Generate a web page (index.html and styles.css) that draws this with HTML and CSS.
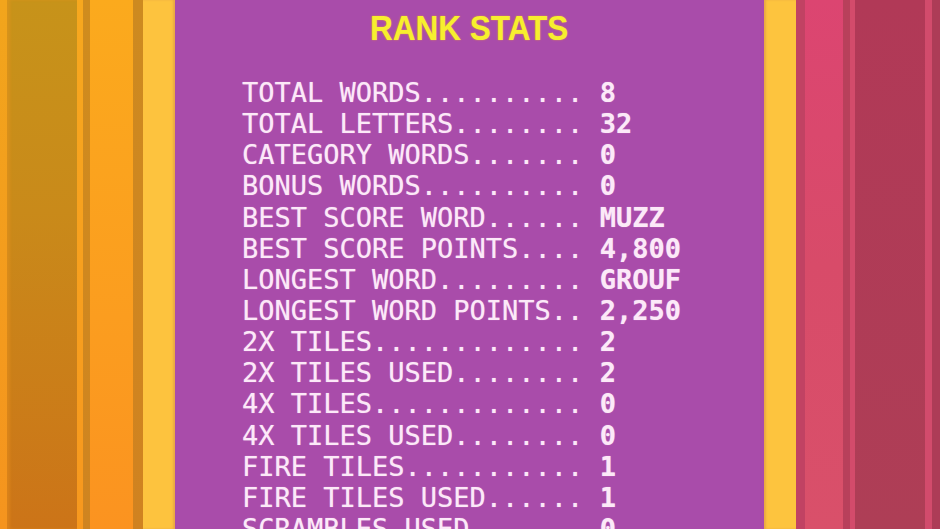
FILE: index.html
```html
<!DOCTYPE html>
<html lang="en">
<head>
<meta charset="utf-8">
<title>Rank Stats</title>
<link rel="stylesheet" href="styles.css">
</head>
<body>
<div class="screen">
  <div class="stripe l1"></div>
  <div class="stripe l2"></div>
  <div class="stripe l3"></div>
  <div class="stripe l4"></div>
  <div class="stripe l5"></div>
  <div class="stripe l6"></div>
  <div class="stripe l7"></div>
  <main class="panel">
    <h1 class="title"><span class="title-text">RANK STATS</span></h1>
    <div class="stats">
      <div class="row"><span class="label">TOTAL WORDS..........</span> <span class="value">8</span></div>
      <div class="row"><span class="label">TOTAL LETTERS........</span> <span class="value">32</span></div>
      <div class="row"><span class="label">CATEGORY WORDS.......</span> <span class="value">0</span></div>
      <div class="row"><span class="label">BONUS WORDS..........</span> <span class="value">0</span></div>
      <div class="row"><span class="label">BEST SCORE WORD......</span> <span class="value">MUZZ</span></div>
      <div class="row"><span class="label">BEST SCORE POINTS....</span> <span class="value">4,800</span></div>
      <div class="row"><span class="label">LONGEST WORD.........</span> <span class="value">GROUF</span></div>
      <div class="row"><span class="label">LONGEST WORD POINTS..</span> <span class="value">2,250</span></div>
      <div class="row"><span class="label">2X TILES.............</span> <span class="value">2</span></div>
      <div class="row"><span class="label">2X TILES USED........</span> <span class="value">2</span></div>
      <div class="row"><span class="label">4X TILES.............</span> <span class="value">0</span></div>
      <div class="row"><span class="label">4X TILES USED........</span> <span class="value">0</span></div>
      <div class="row"><span class="label">FIRE TILES...........</span> <span class="value">1</span></div>
      <div class="row"><span class="label">FIRE TILES USED......</span> <span class="value">1</span></div>
      <div class="row"><span class="label">SCRAMBLES USED.......</span> <span class="value">0</span></div>
    </div>
  </main>
  <div class="stripe r1"></div>
  <div class="stripe r2"></div>
  <div class="stripe r3"></div>
  <div class="stripe r4"></div>
  <div class="stripe r5"></div>
  <div class="stripe r6"></div>
  <div class="stripe r7"></div>
  <div class="stripe r8"></div>
</div>
</body>
</html>
```

FILE: styles.css
```css
html, body {
  margin: 0;
  padding: 0;
  width: 940px;
  height: 529px;
  overflow: hidden;
  background: #a94caa;
}

.screen {
  display: flex;
  width: 940px;
  height: 529px;
}

.stripe {
  flex: none;
  height: 100%;
}

.l1 { width: 7px; background: linear-gradient(#f2a51c, #f5941e); }
.l2 { width: 70px; background: linear-gradient(#c7931a, #c98a1a 40%, #cc7418); box-shadow: inset 3px 0 3px rgba(240,150,30,0.4); }
.l3 { width: 6px; background: linear-gradient(#f7a81e, #f7981e); }
.l4 { width: 7px; background: linear-gradient(#cf8c1e, #cf8420); }
.l5 { width: 43px; background: linear-gradient(#fbaa1d, #fb9d1f 60%, #fb9320); }
.l6 { width: 10px; background: linear-gradient(#cd8a20, #d08220); }
.l7 { width: 32px; background: #fdc33e; box-shadow: inset -2px 0 2px rgba(200,120,80,0.35); }

.panel {
  flex: none;
  width: 589px;
  height: 100%;
  background: #a94caa;
  display: flex;
  flex-direction: column;
  padding: 8px 0 0 67px;
  box-sizing: border-box;
}

.title {
  margin: 0 0 29px -67px;
  height: 40px;
  text-align: center;
  font-family: "Liberation Sans", Arial, sans-serif;
  font-weight: bold;
  font-size: 35px;
  line-height: 40px;
  color: #f7ef2e;
}

.title-text {
  display: inline-block;
  transform: scaleX(0.9);
  text-shadow: 0 0 2px rgba(240, 170, 40, 0.8);
}

.stats {
  display: flex;
  flex-direction: column;
  font-family: "DejaVu Sans Mono", "Liberation Mono", monospace;
  font-size: 27px;
  line-height: 31.15px;
  color: #fce9f8;
  white-space: pre;
  text-shadow: 0 0 1px rgba(255, 230, 250, 0.6);
}

.row {
  height: 31.15px;
}

.value {
  font-weight: bold;
}

.r1 { width: 32px; background: #fdc43e; box-shadow: inset 2px 0 2px rgba(200,120,80,0.35); }
.r2 { width: 9px; background: #c14263; }
.r3 { width: 38px; background: linear-gradient(#dc4571, #d84b69 50%, #d9506a); }
.r4 { width: 7px; background: #b8405b; }
.r5 { width: 5px; background: #d34b6b; }
.r6 { width: 70px; background: linear-gradient(#b13957, #ae3e56); }
.r7 { width: 7px; background: #d24b6c; }
.r8 { width: 8px; background: #ad3c57; }
```
